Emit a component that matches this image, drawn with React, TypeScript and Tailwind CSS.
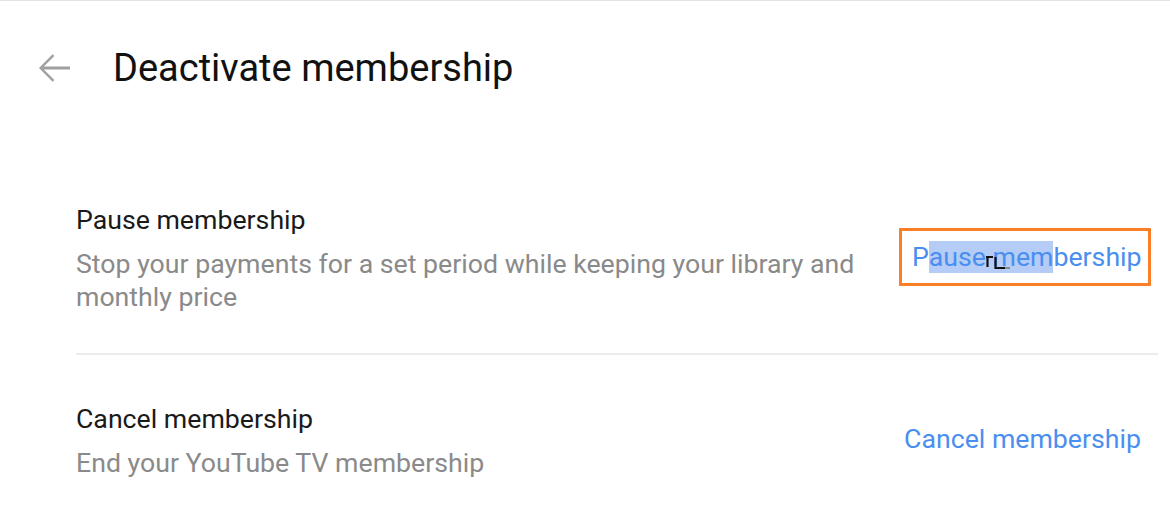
import React from "react";

const BackArrow = () => (
  <svg className="w-[48px] h-[48px] text-[#a0a0a0]" viewBox="0 0 24 24" fill="currentColor">
    <path d="M20 11.3H6.9l5.3-5.3-.9-.9L4.5 12l6.8 6.9.9-.9-5.3-5.3H20z" />
  </svg>
);

const App: React.FC = () => {
  return (
    <div className="w-[1170px] h-[520px] bg-white overflow-hidden border-t border-[#e4e4e4] font-['Roboto','Liberation_Sans',sans-serif]">
      {/* header */}
      <div className="flex items-center h-[136px] pl-[30px] pb-[2px]">
        <BackArrow />
        <h1 className="ml-[35px] text-[38px] text-[#111] leading-none">Deactivate membership</h1>
      </div>

      <div className="pl-[76px] pr-[12px] pt-[68px]">
        {/* pause row */}
        <div className="flex items-start justify-between pb-[39px] border-b-2 border-[#ececec]">
          <div className="w-[800px]">
            <div className="text-[26.7px] text-[#1a1a1a] leading-[30px]">Pause membership</div>
            <p className="mt-[13px] text-[26.7px] text-[#8a8a8a] leading-[33px]">
              Stop your payments for a set period while keeping your library and monthly price
            </p>
          </div>
          <div className="relative mt-[23px] mr-[7px] w-[252px] h-[58px] border-[3px] border-[#fa7f26] pl-[10px] flex items-center">
            <span className="text-[26.7px] text-[#4a8ff0] leading-[30px] whitespace-nowrap">
              P<span className="bg-[#b4ccf6]">ause mem</span>bership
            </span>
            <svg className="absolute left-[83px] top-[24px]" width="26" height="16" viewBox="0 0 26 16">
              <path d="M1 2h7M2.5 1v11M10.5 2v11H20" fill="none" stroke="#111" strokeWidth="2.2" />
              <path d="M20 13h5" stroke="#777" strokeWidth="1.5" />
            </svg>
          </div>
        </div>

        {/* cancel row */}
        <div className="flex items-start justify-between pt-[49px]">
          <div>
            <div className="text-[26.7px] text-[#1a1a1a] leading-[30px]">Cancel membership</div>
            <p className="mt-[13px] text-[26.7px] text-[#8a8a8a] leading-[33px]">End your YouTube TV membership</p>
          </div>
          <span className="mt-[20px] mr-[17px] text-[26.7px] text-[#4a8ff0] leading-[30px] whitespace-nowrap">Cancel membership</span>
        </div>
      </div>
    </div>
  );
};

export default App;
